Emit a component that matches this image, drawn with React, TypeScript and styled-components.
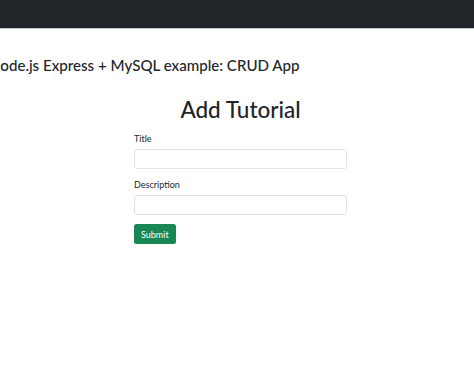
import React, { useState } from 'react';
import styled, { createGlobalStyle } from 'styled-components';

const GlobalStyle = createGlobalStyle`
  html, body {
    margin: 0;
    padding: 0;
    background: #fff;
    font-family: Lato, "Noto Sans", sans-serif;
    color: #212529;
    overflow: hidden;
  }
  * { box-sizing: border-box; }
`;

const NavBar = styled.nav`
  height: 29px;
  background-color: #212529;
  border-bottom: 1px solid #c6cacc;
`;

const Page = styled.div`
  padding-top: 26px;
`;

const AppTitle = styled.h4`
  margin: 0 0 0 -11px;
  font-size: 15.1px;
  font-weight: 500;
  line-height: 20px;
  white-space: nowrap;
`;

const FormWrap = styled.div`
  display: flex;
  justify-content: center;
  padding-left: 7px;
  margin-top: 20px;
`;

const Form = styled.form`
  width: 213px;
  display: flex;
  flex-direction: column;
`;

const FormTitle = styled.h2`
  margin: 0 0 8px;
  font-size: 22.5px;
  font-weight: 500;
  line-height: 30px;
  text-align: center;
`;

const Group = styled.div`
  display: flex;
  flex-direction: column;
  margin-bottom: 10px;
`;

const Label = styled.label`
  font-size: 9px;
  line-height: 12px;
  margin-bottom: 4px;
  color: #212529;
`;

const Input = styled.input`
  height: 20px;
  width: 100%;
  border: 1px solid #dee2e6;
  border-radius: 3px;
  padding: 0 6px;
  font-size: 9px;
  font-family: inherit;
  outline: none;
`;

const SubmitButton = styled.button`
  align-self: flex-start;
  height: 20px;
  margin-top: -1px;
  padding: 0 7px;
  border: none;
  border-radius: 2.5px;
  background-color: #198754;
  color: #fff;
  font-family: inherit;
  font-size: 9px;
  cursor: pointer;
`;

export default function App() {
  const [title, setTitle] = useState('');
  const [description, setDescription] = useState('');

  return (
    <>
      <GlobalStyle />
      <NavBar />
      <Page>
        <AppTitle>Node.js Express + MySQL example: CRUD App</AppTitle>
        <FormWrap>
          <Form onSubmit={(e) => e.preventDefault()}>
            <FormTitle>Add Tutorial</FormTitle>
            <Group>
              <Label htmlFor="title">Title</Label>
              <Input id="title" value={title} onChange={(e) => setTitle(e.target.value)} />
            </Group>
            <Group>
              <Label htmlFor="description">Description</Label>
              <Input
                id="description"
                value={description}
                onChange={(e) => setDescription(e.target.value)}
              />
            </Group>
            <SubmitButton type="submit">Submit</SubmitButton>
          </Form>
        </FormWrap>
      </Page>
    </>
  );
}
